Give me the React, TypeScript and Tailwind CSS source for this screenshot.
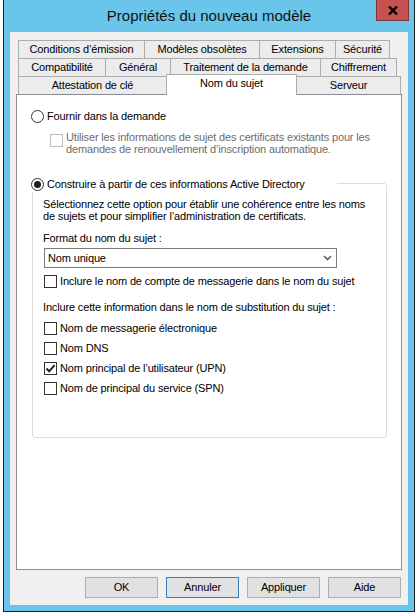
import React from "react";

function Radio({ checked }: { checked?: boolean }) {
  return (
    <span className="w-[13px] h-[13px] rounded-full border border-[#333] bg-white flex items-center justify-center shrink-0">
      {checked && <span className="w-[7px] h-[7px] rounded-full bg-[#1e1e1e]" />}
    </span>
  );
}

function Check({ checked, disabled }: { checked?: boolean; disabled?: boolean }) {
  return (
    <span
      className={
        "w-[13px] h-[13px] border bg-white shrink-0 flex items-center justify-center " +
        (disabled ? "border-[#bcbcbc]" : "border-[#333]")
      }
    >
      {checked && (
        <svg width="11" height="11" viewBox="0 0 11 11">
          <path d="M1.5 5.5 L4.2 8.3 L9.6 2.2" fill="none" stroke="#222" strokeWidth="2" />
        </svg>
      )}
    </span>
  );
}

type Tab = { label: string; w: number; selected?: boolean };

const rows: Tab[][] = [
  [
    { label: "Conditions d’émission", w: 126 },
    { label: "Modèles obsolètes", w: 115 },
    { label: "Extensions", w: 76 },
    { label: "Sécurité", w: 55 },
  ],
  [
    { label: "Compatibilité", w: 87 },
    { label: "Général", w: 65 },
    { label: "Traitement de la demande", w: 150 },
    { label: "Chiffrement", w: 77 },
  ],
  [
    { label: "Attestation de clé", w: 148 },
    { label: "Nom du sujet", w: 131, selected: true },
    { label: "Serveur", w: 104 },
  ],
];

function TabRow({ tabs }: { tabs: Tab[] }) {
  return (
    <div className="flex items-end h-[18px]">
      {tabs.map((t, i) => {
        const last = i === tabs.length - 1;
        if (t.selected) {
          return (
            <div
              key={t.label}
              style={{ width: t.w }}
              className="relative z-10 h-[21px] -mb-[1px] bg-white border-x border-t border-[#acacac] flex items-center justify-center pb-[3px]"
            >
              {t.label}
            </div>
          );
        }
        const prevSel = i > 0 && tabs[i - 1].selected;
        return (
          <div
            key={t.label}
            style={{ width: t.w }}
            className={
              "h-[18px] bg-[#ececec] border-t border-[#acacac] flex items-center justify-center " +
              (prevSel ? "" : "border-l ") +
              (last ? "border-r" : "")
            }
          >
            {t.label}
          </div>
        );
      })}
    </div>
  );
}

function Button({ label, focused }: { label: string; focused?: boolean }) {
  return (
    <div
      className={
        "w-[73px] h-[21px] bg-[#e1e1e1] border flex items-center justify-center " +
        (focused ? "border-[#3a7fbb]" : "border-[#adadad]")
      }
    >
      {label}
    </div>
  );
}

export default function App() {
  return (
    <div className="w-[416px] h-[615px] bg-white pl-[3px] overflow-hidden font-['Liberation_Sans',Arial,sans-serif] text-[11px] tracking-[-0.15px] text-black">
      <div className="relative w-[412px] h-[612px] border-x border-b border-[#1e1e1e] bg-[#69c6ea] flex flex-col">
        <div className="h-[32px] flex items-center justify-center text-[15px] tracking-normal text-[#111]">
          Propriétés du nouveau modèle
        </div>
        <div className="absolute top-0 right-[5px] w-[33px] h-[21px] bg-[#c75050] border-x border-b border-[#7c3434] flex items-center justify-center">
          <svg width="10" height="9" viewBox="0 0 10 9">
            <path d="M1 0.5 L9 8.5 M9 0.5 L1 8.5" stroke="#000" strokeWidth="2.4" />
          </svg>
        </div>

        <div className="mx-[6px] mb-[6px] flex-1 bg-[#f0f0f0] px-[6px] pt-[8px] flex flex-col">
          <div className="pl-[2px]">
            {rows.map((r, i) => (
              <TabRow key={i} tabs={r} />
            ))}
          </div>

          <div className="w-[386px] h-[476px] bg-white border border-[#898c95] pl-[14px]">
            <div className="mt-[13px] h-[16px] flex items-center gap-[3px]">
              <Radio />
              <span>Fournir dans la demande</span>
            </div>

            <div className="mt-[7px] ml-[19px] flex gap-[3px]">
              <div className="mt-[3px]">
                <Check disabled />
              </div>
              <div className="leading-[12px] text-[#6d6d6d] whitespace-nowrap">
                Utiliser les informations de sujet des certificats existants pour les
                <br />
                demandes de renouvellement d’inscription automatique.
              </div>
            </div>

            <div className="relative mt-[28px] ml-[1px] w-[355px] h-[255px] border border-[#dcdcdc] rounded-[3px] pl-[10px] pt-[14px]">
              <div className="absolute top-[-8px] left-[-2px] h-[16px] w-[306px] bg-white flex items-center gap-[3px]">
                <Radio checked />
                <span>Construire à partir de ces informations Active Directory</span>
              </div>

              <div className="leading-[12px] whitespace-nowrap">
                Sélectionnez cette option pour établir une cohérence entre les noms
                <br />
                de sujets et pour simplifier l’administration de certificats.
              </div>

              <div className="mt-[10px] leading-[12px]">Format du nom du sujet :</div>

              <div className="mt-[4px] ml-[1px] w-[293px] h-[20px] border border-[#7a7a7a] bg-white flex items-center justify-between pl-[3px] pr-[4px]">
                <span>Nom unique</span>
                <svg width="9" height="6" viewBox="0 0 9 6">
                  <path d="M1 1 L4.5 4.5 L8 1" fill="none" stroke="#606060" strokeWidth="1.6" />
                </svg>
              </div>

              <div className="mt-[6px] ml-[1px] h-[14px] flex items-center gap-[3px]">
                <Check />
                <span>Inclure le nom de compte de messagerie dans le nom du sujet</span>
              </div>

              <div className="mt-[13px] leading-[12px]">
                Inclure cette information dans le nom de substitution du sujet :
              </div>

              <div className="mt-[5px] ml-[1px] flex flex-col">
                <div className="h-[20px] flex items-center gap-[3px]">
                  <Check />
                  <span>Nom de messagerie électronique</span>
                </div>
                <div className="h-[20px] flex items-center gap-[3px]">
                  <Check />
                  <span>Nom DNS</span>
                </div>
                <div className="h-[20px] flex items-center gap-[3px]">
                  <Check checked />
                  <span>Nom principal de l’utilisateur (UPN)</span>
                </div>
                <div className="h-[20px] flex items-center gap-[3px]">
                  <Check />
                  <span>Nom de principal du service (SPN)</span>
                </div>
              </div>
            </div>
          </div>

          <div className="mt-[7px] flex justify-end gap-[8px] pr-[1px]">
            <Button label="OK" />
            <Button label="Annuler" focused />
            <Button label="Appliquer" />
            <Button label="Aide" />
          </div>
        </div>
      </div>
    </div>
  );
}
